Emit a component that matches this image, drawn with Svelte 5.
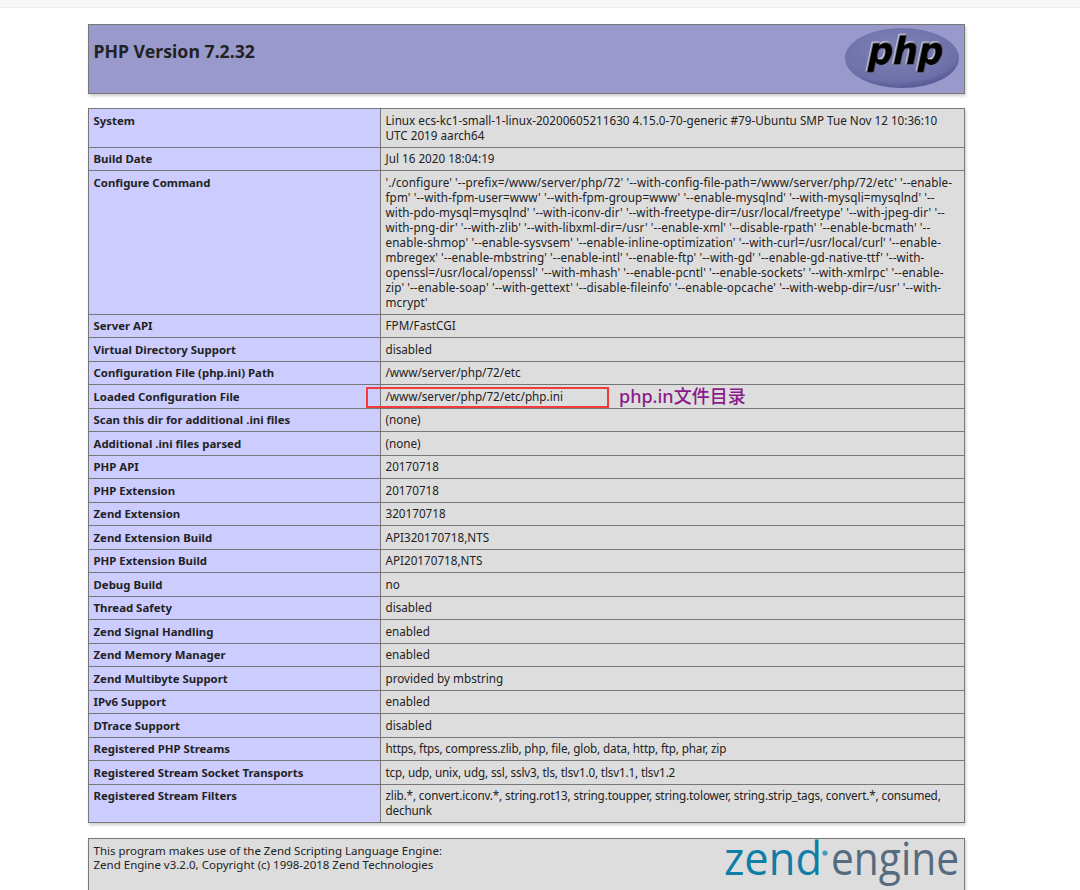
<script lang="ts">
  const configure = [
    "'./configure' '--prefix=/www/server/php/72' '--with-config-file-path=/www/server/php/72/etc' '--enable-",
    "fpm' '--with-fpm-user=www' '--with-fpm-group=www' '--enable-mysqlnd' '--with-mysqli=mysqlnd' '--",
    "with-pdo-mysql=mysqlnd' '--with-iconv-dir' '--with-freetype-dir=/usr/local/freetype' '--with-jpeg-dir' '--",
    "with-png-dir' '--with-zlib' '--with-libxml-dir=/usr' '--enable-xml' '--disable-rpath' '--enable-bcmath' '--",
    "enable-shmop' '--enable-sysvsem' '--enable-inline-optimization' '--with-curl=/usr/local/curl' '--enable-",
    "mbregex' '--enable-mbstring' '--enable-intl' '--enable-ftp' '--with-gd' '--enable-gd-native-ttf' '--with-",
    "openssl=/usr/local/openssl' '--with-mhash' '--enable-pcntl' '--enable-sockets' '--with-xmlrpc' '--enable-",
    "zip' '--enable-soap' '--with-gettext' '--disable-fileinfo' '--enable-opcache' '--with-webp-dir=/usr' '--with-",
    "mcrypt'"
  ];

  const rows: [string, string[]][] = [
    ["System", ["Linux ecs-kc1-small-1-linux-20200605211630 4.15.0-70-generic #79-Ubuntu SMP Tue Nov 12 10:36:10", "UTC 2019 aarch64"]],
    ["Build Date", ["Jul 16 2020 18:04:19"]],
    ["Configure Command", configure],
    ["Server API", ["FPM/FastCGI"]],
    ["Virtual Directory Support", ["disabled"]],
    ["Configuration File (php.ini) Path", ["/www/server/php/72/etc"]],
    ["Loaded Configuration File", ["/www/server/php/72/etc/php.ini"]],
    ["Scan this dir for additional .ini files", ["(none)"]],
    ["Additional .ini files parsed", ["(none)"]],
    ["PHP API", ["20170718"]],
    ["PHP Extension", ["20170718"]],
    ["Zend Extension", ["320170718"]],
    ["Zend Extension Build", ["API320170718,NTS"]],
    ["PHP Extension Build", ["API20170718,NTS"]],
    ["Debug Build", ["no"]],
    ["Thread Safety", ["disabled"]],
    ["Zend Signal Handling", ["enabled"]],
    ["Zend Memory Manager", ["enabled"]],
    ["Zend Multibyte Support", ["provided by mbstring"]],
    ["IPv6 Support", ["enabled"]],
    ["DTrace Support", ["disabled"]],
    ["Registered PHP Streams", ["https, ftps, compress.zlib, php, file, glob, data, http, ftp, phar, zip"]],
    ["Registered Stream Socket Transports", ["tcp, udp, unix, udg, ssl, sslv3, tls, tlsv1.0, tlsv1.1, tlsv1.2"]],
    ["Registered Stream Filters", ["zlib.*, convert.iconv.*, string.rot13, string.toupper, string.tolower, string.strip_tags, convert.*, consumed,", "dechunk"]]
  ];
</script>

<div class="page">
  <div class="topbar"></div>

  <div class="center">
    <div class="box header">
      <h1>PHP Version 7.2.32</h1>
      <svg class="php-logo" viewBox="0 0 114 60" width="114" height="60" aria-label="PHP logo">
        <defs>
          <radialGradient id="php-oval" cx="45%" cy="35%" r="70%">
            <stop offset="0" stop-color="#7f83b6" />
            <stop offset="0.78" stop-color="#6c70a8" />
            <stop offset="1" stop-color="#4a4e8c" />
          </radialGradient>
        </defs>
        <ellipse cx="57" cy="30" rx="57" ry="30" fill="url(#php-oval)" />
        <text transform="translate(21 36) skewX(-12)" class="php-word" textLength="75" lengthAdjust="spacingAndGlyphs">php</text>
      </svg>
    </div>

    <div class="box info">
      {#each rows as [name, lines]}
        <div class="row">
          <div class="key">{name}</div>
          <div class="val" class:loose={name === "Configure Command"} class:tight={name.startsWith("Registered")}>
            {#each lines as line}
              <div class="line">{line}</div>
            {/each}
          </div>
        </div>
      {/each}
    </div>

    <div class="box footer">
      <div class="credit">
        <div>This program makes use of the Zend Scripting Language Engine:</div>
        <div>Zend Engine v3.2.0, Copyright (c) 1998-2018 Zend Technologies</div>
      </div>
      <svg class="zend-logo" viewBox="0 0 235 48" width="235" height="48" aria-label="Zend Engine logo">
        <text x="0" y="33" class="zend-word" textLength="98" lengthAdjust="spacingAndGlyphs">zend</text>
        <circle cx="101" cy="11" r="2.6" fill="#3f9cc0" />
        <text x="107" y="33" class="engine-word" textLength="128" lengthAdjust="spacingAndGlyphs">engine</text>
      </svg>
    </div>
  </div>

  <div class="marker"></div>
  <div class="note">php.in文件目录</div>
</div>

<style>
  :global(body) {
    margin: 0;
    background: #fff;
  }
  .page {
    position: relative;
    height: 890px;
    overflow: hidden;
    font-family: "Noto Sans", "Liberation Sans", sans-serif;
    font-size: 11.7px;
    line-height: 15px;
    color: #222;
  }
  .topbar {
    height: 7px;
    background: #f8f8f8;
    border-bottom: 1px solid #eee;
  }
  .center {
    width: 877px;
    margin: 16px 0 0 88px;
  }
  .box {
    box-sizing: border-box;
    border: 1px solid #777;
    box-shadow: 1px 2px 3px #ccc;
  }
  .header {
    display: flex;
    justify-content: space-between;
    height: 70px;
    padding: 3px 5px 0 4.5px;
    background: #9999cc;
  }
  h1 {
    margin: 11px 0 0;
    font-size: 17.7px;
    line-height: 24px;
    font-weight: bold;
  }
  .php-logo {
    flex: none;
    overflow: visible;
  }
  .php-word {
    font-family: "DejaVu Sans", sans-serif;
    font-size: 36px;
    font-weight: bold;
    fill: #000;
    stroke: #000;
    stroke-width: 0.8px;
    filter: drop-shadow(0.8px 0.8px 0 #e8e8f4) drop-shadow(-0.8px -0.8px 0 #e8e8f4);
  }
  .info {
    margin-top: 14px;
    background: #ddd;
  }
  .row {
    display: grid;
    grid-template-columns: 292px 1fr;
    border-bottom: 1px solid #777;
  }
  .row:last-child {
    border-bottom: none;
  }
  .key {
    padding: 3.75px 4.5px;
    background: #ccccff;
    border-right: 1px solid #777;
    font-size: 11.4px;
    font-weight: bold;
    white-space: nowrap;
  }
  .val {
    padding: 3.75px 5px 3.75px 4.5px;
    white-space: nowrap;
  }
  .val.loose {
    letter-spacing: 0.1px;
  }
  .val.tight {
    letter-spacing: -0.15px;
  }
  .footer {
    display: flex;
    justify-content: space-between;
    margin-top: 15px;
    height: 70px;
    padding: 0 5px 0 4.5px;
    background: #ddd;
  }
  .credit {
    padding-top: 4.5px;
    font-size: 11.5px;
    line-height: 14.5px;
  }
  .zend-logo {
    flex: none;
    margin-top: 3px;
    overflow: visible;
  }
  .zend-word,
  .engine-word {
    font-family: "Open Sans", "Liberation Sans", sans-serif;
    font-size: 46px;
  }
  .zend-word {
    fill: #0f7ea6;
  }
  .engine-word {
    fill: #566b7f;
  }
  .marker {
    position: absolute;
    left: 366px;
    top: 386.5px;
    width: 243px;
    height: 21px;
    box-sizing: border-box;
    border: 2px solid #f23c3c;
  }
  .note {
    position: absolute;
    left: 619px;
    top: 384px;
    font-family: "Noto Sans", "Noto Sans CJK SC", sans-serif;
    font-size: 18px;
    line-height: 24px;
    font-weight: 500;
    color: #8b1a8b;
    white-space: nowrap;
  }
</style>
